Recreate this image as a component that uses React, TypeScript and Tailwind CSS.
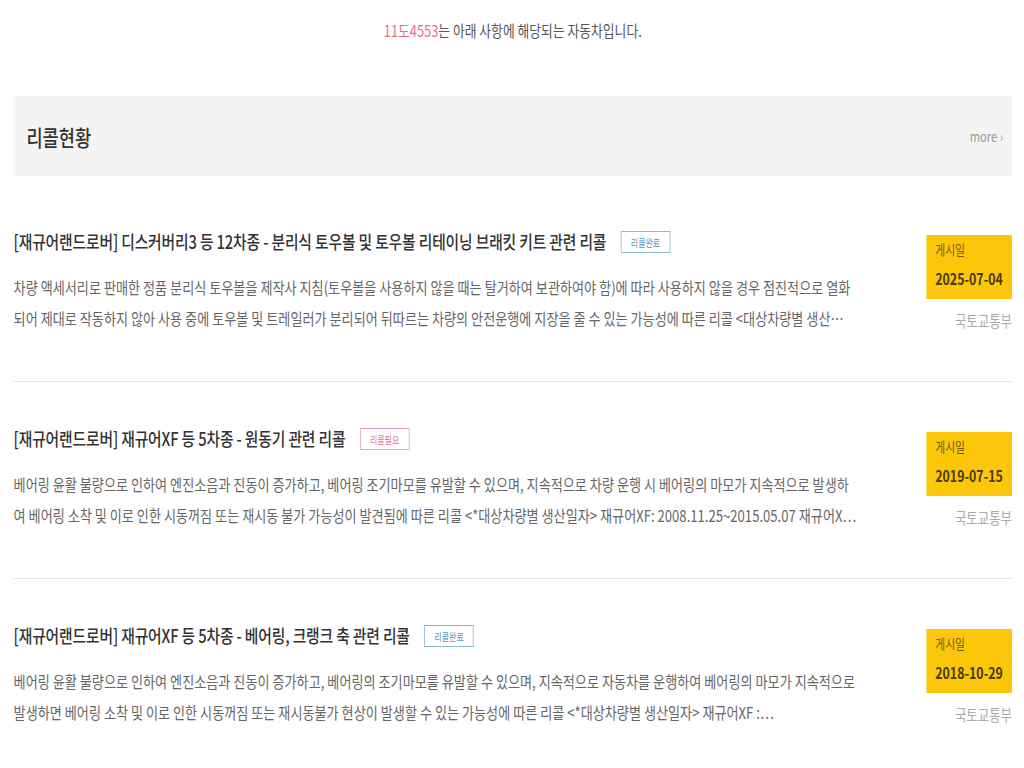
import React from "react";

type Recall = {
  title: string;
  status: "done" | "need";
  lines: [string, string];
  date: string;
  agency: string;
};

const recalls: Recall[] = [
  {
    title:
      "[재규어랜드로버] 디스커버리3 등 12차종 - 분리식 토우볼 및 토우볼 리테이닝 브래킷 키트 관련 리콜",
    status: "done",
    lines: [
      "차량 액세서리로 판매한 정품 분리식 토우볼을 제작사 지침(토우볼을 사용하지 않을 때는 탈거하여 보관하여야 함)에 따라 사용하지 않을 경우 점진적으로 열화",
      "되어 제대로 작동하지 않아 사용 중에 토우볼 및 트레일러가 분리되어 뒤따르는 차량의 안전운행에 지장을 줄 수 있는 가능성에 따른 리콜 <대상차량별 생산…",
    ],
    date: "2025-07-04",
    agency: "국토교통부",
  },
  {
    title: "[재규어랜드로버] 재규어XF 등 5차종 - 원동기 관련 리콜",
    status: "need",
    lines: [
      "베어링 윤활 불량으로 인하여 엔진소음과 진동이 증가하고, 베어링 조기마모를 유발할 수 있으며, 지속적으로 차량 운행 시 베어링의 마모가 지속적으로 발생하",
      "여 베어링 소착 및 이로 인한 시동꺼짐 또는 재시동 불가 가능성이 발견됨에 따른 리콜 <*대상차량별 생산일자> 재규어XF: 2008.11.25~2015.05.07  재규어X…",
    ],
    date: "2019-07-15",
    agency: "국토교통부",
  },
  {
    title: "[재규어랜드로버] 재규어XF 등 5차종 - 베어링, 크랭크 축 관련 리콜",
    status: "done",
    lines: [
      "베어링 윤활 불량으로 인하여 엔진소음과 진동이 증가하고, 베어링의 조기마모를 유발할 수 있으며, 지속적으로 자동차를 운행하여 베어링의 마모가 지속적으로",
      "발생하면 베어링 소착 및 이로 인한 시동꺼짐 또는 재시동불가 현상이 발생할 수 있는 가능성에 따른 리콜 <*대상차량별 생산일자> 재규어XF :…",
    ],
    date: "2018-10-29",
    agency: "국토교통부",
  },
];

function StatusBadge({ status }: { status: Recall["status"] }) {
  // blue = 리콜완료, pink = 리콜필요
  if (status === "need") {
    return (
      <span className="ml-[18px] flex h-[22px] w-[62px] shrink-0 items-center justify-center border border-[#e7a3b4] text-[10px] text-[#e07892]">
        리콜필요
      </span>
    );
  }
  return (
    <span className="ml-[18px] flex h-[22px] w-[62px] shrink-0 items-center justify-center border border-[#8fb8cc] text-[10px] text-[#4f97bd]">
      리콜완료
    </span>
  );
}

function RecallItem({ item, first }: { item: Recall; first: boolean }) {
  return (
    <div
      className={
        first
          ? "flex pt-[43px] pb-[47px]"
          : "flex border-t border-[#e6e6e6] pt-[43px] pb-[47px]"
      }
    >
      <div className="w-[1045px] shrink-0">
        <div className="flex h-[28px] items-center">
          <span className="whitespace-nowrap text-[18.5px] font-medium tracking-[-0.2px] text-[#333]">
            {item.title}
          </span>
          <StatusBadge status={item.status} />
        </div>
        <div className="mt-[16px] text-[16.4px] leading-[31px] text-[#666]">
          <span className="block whitespace-nowrap">{item.lines[0]}</span>
          <span className="block whitespace-nowrap">{item.lines[1]}</span>
        </div>
      </div>
      <div className="flex flex-1 flex-col items-end justify-center pt-[3px]">
        <div className="flex h-[64px] w-[107px] flex-col bg-[#fcc70a] pl-[11px] pt-[6px]">
          <span className="text-[13.5px] leading-[16px] text-[#7a5a00]">게시일</span>
          <span className="mt-[11px] text-[15.5px] font-bold leading-[20px] text-[#4b3a06]">
            {item.date}
          </span>
        </div>
        <span className="mt-[11px] text-[15.5px] leading-[20px] text-[#aaa]">{item.agency}</span>
      </div>
    </div>
  );
}

export default function App() {
  return (
    <div className="h-[768px] w-[1024px] overflow-hidden bg-white font-['Noto_Sans_CJK_KR','Noto_Sans',sans-serif]">
      {/* source page is 1280 wide, squeezed into the 1024 shot */}
      <div className="w-[1280px] origin-top-left scale-x-[0.8] pl-[17px] pr-[15px]">
        <p className="pt-[19px] text-center text-[16px] leading-[22px] text-[#555]">
          <span className="text-[#e4708a]">11도4553</span>는 아래 사항에 해당되는 자동차입니다.
        </p>

        <div className="mt-[55px] flex h-[80px] items-center justify-between bg-[#f4f4f4] pl-[16px] pr-[11px]">
          <h2 className="text-[22px] font-medium text-[#333]">리콜현황</h2>
          <span className="text-[14px] text-[#999]">more ›</span>
        </div>

        <div className="mt-[9px]">
          {recalls.map((r, i) => (
            <RecallItem key={r.date} item={r} first={i === 0} />
          ))}
        </div>
      </div>
    </div>
  );
}
